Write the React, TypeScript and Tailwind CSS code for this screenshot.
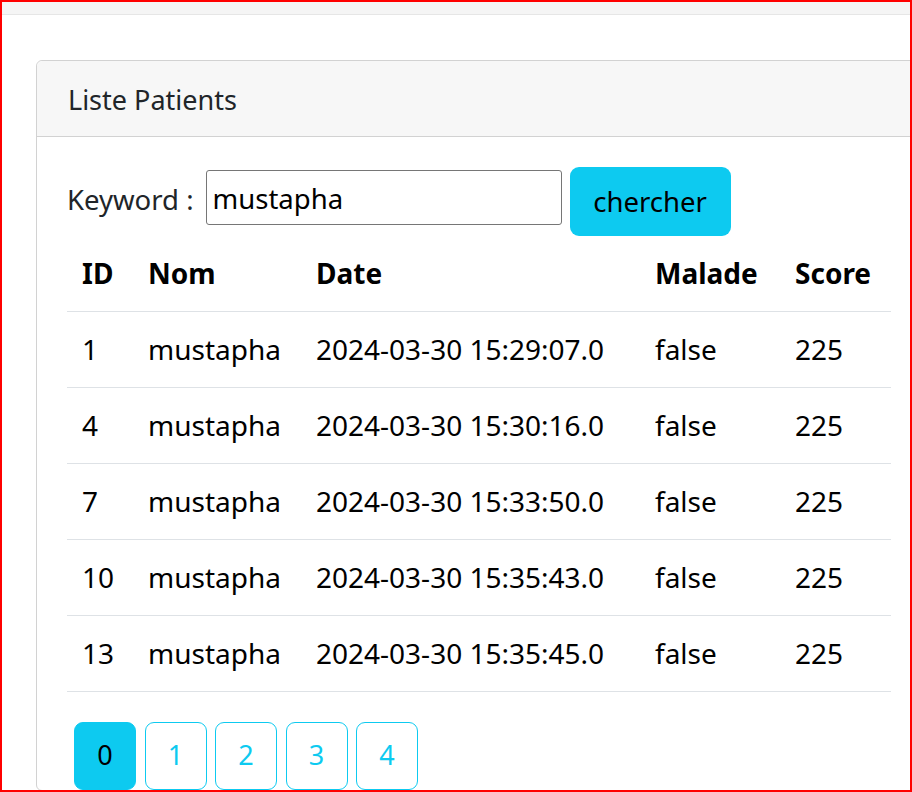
import React from "react";

type Patient = {
  id: number;
  nom: string;
  date: string;
  malade: boolean;
  score: number;
};

const patients: Patient[] = [
  { id: 1, nom: "mustapha", date: "2024-03-30 15:29:07.0", malade: false, score: 225 },
  { id: 4, nom: "mustapha", date: "2024-03-30 15:30:16.0", malade: false, score: 225 },
  { id: 7, nom: "mustapha", date: "2024-03-30 15:33:50.0", malade: false, score: 225 },
  { id: 10, nom: "mustapha", date: "2024-03-30 15:35:43.0", malade: false, score: 225 },
  { id: 13, nom: "mustapha", date: "2024-03-30 15:35:45.0", malade: false, score: 225 },
];

const pages = [0, 1, 2, 3, 4];

const App = () => {
  const currentPage = 0;

  return (
    <div
      className="relative h-[792px] w-[912px] overflow-hidden border-2 border-[#ff0000] bg-white text-[#212529]"
      style={{ fontFamily: '"Noto Sans", "Open Sans", sans-serif' }}
    >
      <div className="h-[13px] border-b border-[#e6e6e6] bg-[#f5f5f5]" />

      <div className="ml-[34px] mt-[45px] w-[890px] rounded-[6px] border border-[#d2d2d2]">
        <div className="flex h-[76px] items-center rounded-t-[6px] border-b border-[#d2d2d2] bg-[#f7f7f7] px-[31px] pt-[3px] text-[27px]">
          Liste Patients
        </div>

        <div className="px-[30px] pt-[30px]">
          <div className="flex h-[69px] items-center text-[27.5px]">
            <span className="mr-[12px] mt-[-4px]">Keyword :</span>
            <div className="mt-[-8px] flex h-[55px] w-[356px] items-center rounded-[3px] border border-[#767676] px-[6px] pt-[2px] text-black">
              mustapha
            </div>
            <button className="ml-[8px] h-[69px] w-[161px] rounded-[9px] bg-[#0dcaf0] text-black">
              chercher
            </button>
          </div>

          <table className="w-[824px] table-fixed border-collapse text-left text-[28px] text-black">
            <colgroup>
              <col className="w-[66px]" />
              <col className="w-[168px]" />
              <col className="w-[339px]" />
              <col className="w-[140px]" />
              <col className="w-[111px]" />
            </colgroup>
            <thead>
              <tr className="h-[75px] border-b border-[#dee2e6]">
                <th className="px-[15px] font-bold">ID</th>
                <th className="px-[15px] font-bold">Nom</th>
                <th className="px-[15px] font-bold">Date</th>
                <th className="px-[15px] font-bold">Malade</th>
                <th className="px-[15px] font-bold">Score</th>
              </tr>
            </thead>
            <tbody>
              {patients.map((p) => (
                <tr key={p.id} className="h-[76px] border-b border-[#dee2e6]">
                  <td className="px-[15px]">{p.id}</td>
                  <td className="px-[15px]">{p.nom}</td>
                  <td className="px-[15px]">{p.date}</td>
                  <td className="px-[15px]">{String(p.malade)}</td>
                  <td className="px-[15px]">{p.score}</td>
                </tr>
              ))}
            </tbody>
          </table>

          <ul className="mt-[30px] flex gap-[8.5px] pl-[7px]">
            {pages.map((page) => (
              <li key={page}>
                <button
                  className={
                    page === currentPage
                      ? "flex h-[68px] w-[62px] items-center justify-center rounded-[9px] border border-[#0dcaf0] bg-[#0dcaf0] text-[27px] text-black"
                      : "flex h-[68px] w-[62px] items-center justify-center rounded-[9px] border border-[#0dcaf0] bg-white text-[27px] text-[#0dcaf0]"
                  }
                >
                  {page}
                </button>
              </li>
            ))}
          </ul>
        </div>
      </div>
    </div>
  );
};

export default App;
